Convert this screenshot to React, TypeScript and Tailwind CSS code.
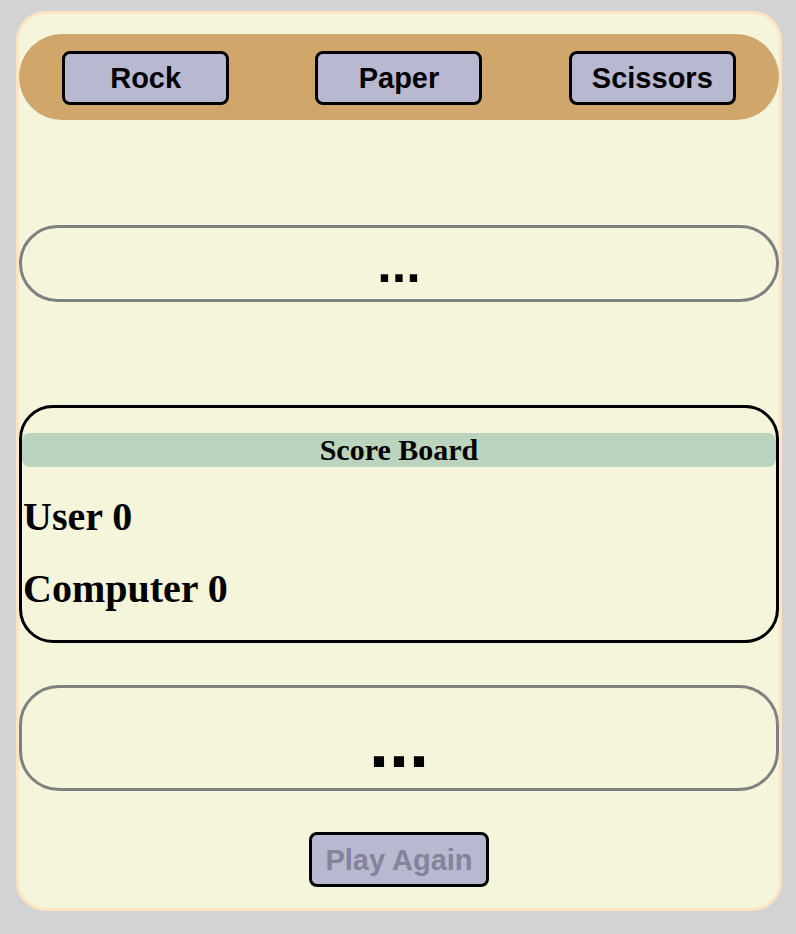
const choices = ["Rock", "Paper", "Scissors"];

export default function App() {
  return (
    <div className="min-h-[934px] bg-[#d3d3d3] pt-[11px] font-['Liberation_Sans',Arial,sans-serif]">
      <div className="ml-[16px] flex h-[900px] w-[766px] flex-col rounded-[30px] border-[3px] border-[#ffe4c4] bg-[#f5f5dc]">
        {/* choices */}
        <div className="mt-[20px] flex h-[86px] items-center justify-around rounded-[45px] bg-[#d0a66a] pt-[2px]">
          {choices.map((c) => (
            <button
              key={c}
              className="h-[54px] w-[167px] rounded-[8px] border-[3px] border-black bg-[#b8b8d0] pt-[2px] text-[29px] font-bold text-black"
            >
              {c}
            </button>
          ))}
        </div>

        {/* result */}
        <div className="mt-[105px] flex h-[77px] items-end justify-center rounded-[40px] border-[3px] border-[#808080] pb-[9px]">
          <span className="text-[52px] font-bold leading-none">...</span>
        </div>

        {/* score board */}
        <div className="mt-[103px] flex h-[238px] flex-col rounded-[34px] border-[3px] border-black font-['Liberation_Serif','Times_New_Roman',serif] font-bold">
          <div className="mt-[25px] h-[34px] rounded-[8px] bg-[#bbd4bd] text-center text-[30px] leading-[34px]">
            Score Board
          </div>
          <p className="mt-[30px] pl-[1px] text-[40px] leading-none">User 0</p>
          <p className="mt-[32px] pl-[1px] text-[40px] leading-none">Computer 0</p>
        </div>

        {/* message */}
        <div className="mt-[42px] flex h-[106px] items-end justify-center rounded-[40px] border-[3px] border-[#808080] pb-[10px]">
          <span className="text-[72px] font-bold leading-none">...</span>
        </div>

        <div className="mt-[41px] flex justify-center">
          <button
            disabled
            className="h-[55px] rounded-[8px] border-[3px] border-black bg-[#b8b8d0] px-[13px] pt-[2px] text-[29px] font-bold text-[#83839a]"
          >
            Play Again
          </button>
        </div>
      </div>
    </div>
  );
}
